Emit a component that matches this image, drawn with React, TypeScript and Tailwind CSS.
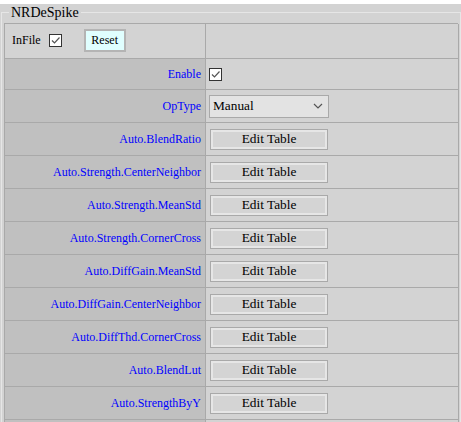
import React from "react";

const serif = { fontFamily: '"Liberation Serif", "Times New Roman", serif' };

function Check() {
  return (
    <span className="inline-flex h-[13px] w-[13px] items-center justify-center border border-[#333333] bg-white">
      <svg width="11" height="11" viewBox="0 0 11 11">
        <path d="M2 5.5 L4.5 8 L9.5 2.5" fill="none" stroke="#555555" strokeWidth="1.2" />
      </svg>
    </span>
  );
}

function EditBtn() {
  return (
    <div className="flex h-[21px] w-[118px] items-center justify-center border border-[#a9a9a9] bg-[#d4d4d4] shadow-[inset_0_0_0_2px_#e6e6e6] text-[13.33px] text-black">
      Edit Table
    </div>
  );
}

const rows = [
  "Auto.BlendRatio",
  "Auto.Strength.CenterNeighbor",
  "Auto.Strength.MeanStd",
  "Auto.Strength.CornerCross",
  "Auto.DiffGain.MeanStd",
  "Auto.DiffGain.CenterNeighbor",
  "Auto.DiffThd.CornerCross",
  "Auto.BlendLut",
  "Auto.StrengthByY",
];

export default function App() {
  return (
    <div className="h-[422px] w-[461px] overflow-hidden bg-white pt-[4px]" style={serif}>
      <div className="h-full bg-[#d3d3d3]">
        <fieldset className="ml-[1px] w-[459px] border border-[#e6e6e6] px-[2px] pb-[2px] pt-[2px]">
          <legend className="ml-[5px] px-[2px] text-[14px] leading-[17px] text-black">NRDeSpike</legend>
          <div className="grid w-[454px] grid-cols-[201px_253px] border-l border-t border-[#a9a9a9]">
            <div className="flex h-[35px] items-center border-b border-r border-[#a9a9a9] bg-[#d3d3d3] pb-[2px] pl-[7px] text-[12px] text-black">
              <span>InFile</span>
              <span className="ml-[8px] flex">
                <Check />
              </span>
              <span className="ml-[22px] flex h-[23px] w-[42px] items-center justify-center border-2 border-[#b4b4b4] bg-[#e0ffff] text-[12px]">
                Reset
              </span>
            </div>
            <div className="h-[35px] border-b border-r border-[#a9a9a9] bg-[#d3d3d3]" />

            <div className="flex h-[31px] items-center justify-end border-b border-r border-[#a9a9a9] bg-[#c0c0c0] pr-[4px] text-[12px] text-[#0000ff]">
              Enable
            </div>
            <div className="flex h-[31px] items-center border-b border-r border-[#a9a9a9] bg-[#d3d3d3] pl-[3px]">
              <Check />
            </div>

            <div className="flex h-[33px] items-center justify-end border-b border-r border-[#a9a9a9] bg-[#c0c0c0] pr-[4px] text-[12px] text-[#0000ff]">
              OpType
            </div>
            <div className="flex h-[33px] items-center border-b border-r border-[#a9a9a9] bg-[#d3d3d3] pl-[3px]">
              <div className="flex h-[23px] w-[120px] items-center justify-between border border-[#a9a9a9] bg-[#e3e3e3] pl-[3px] pr-[5px] text-[13.33px] text-black">
                <span>Manual</span>
                <svg width="10" height="6" viewBox="0 0 10 6">
                  <path d="M1 1 L5 5 L9 1" fill="none" stroke="#555555" strokeWidth="1.2" />
                </svg>
              </div>
            </div>

            {rows.map((r) => (
              <React.Fragment key={r}>
                <div className="flex h-[33px] items-center justify-end border-b border-r border-[#a9a9a9] bg-[#c0c0c0] pr-[4px] text-[12px] text-[#0000ff]">
                  {r}
                </div>
                <div className="flex h-[33px] items-center border-b border-r border-[#a9a9a9] bg-[#d3d3d3] pl-[4px]">
                  <EditBtn />
                </div>
              </React.Fragment>
            ))}
            <div className="h-[33px] border-b border-r border-[#a9a9a9] bg-[#c0c0c0]" />
            <div className="h-[33px] border-b border-r border-[#a9a9a9] bg-[#d3d3d3]" />
          </div>
        </fieldset>
      </div>
    </div>
  );
}
